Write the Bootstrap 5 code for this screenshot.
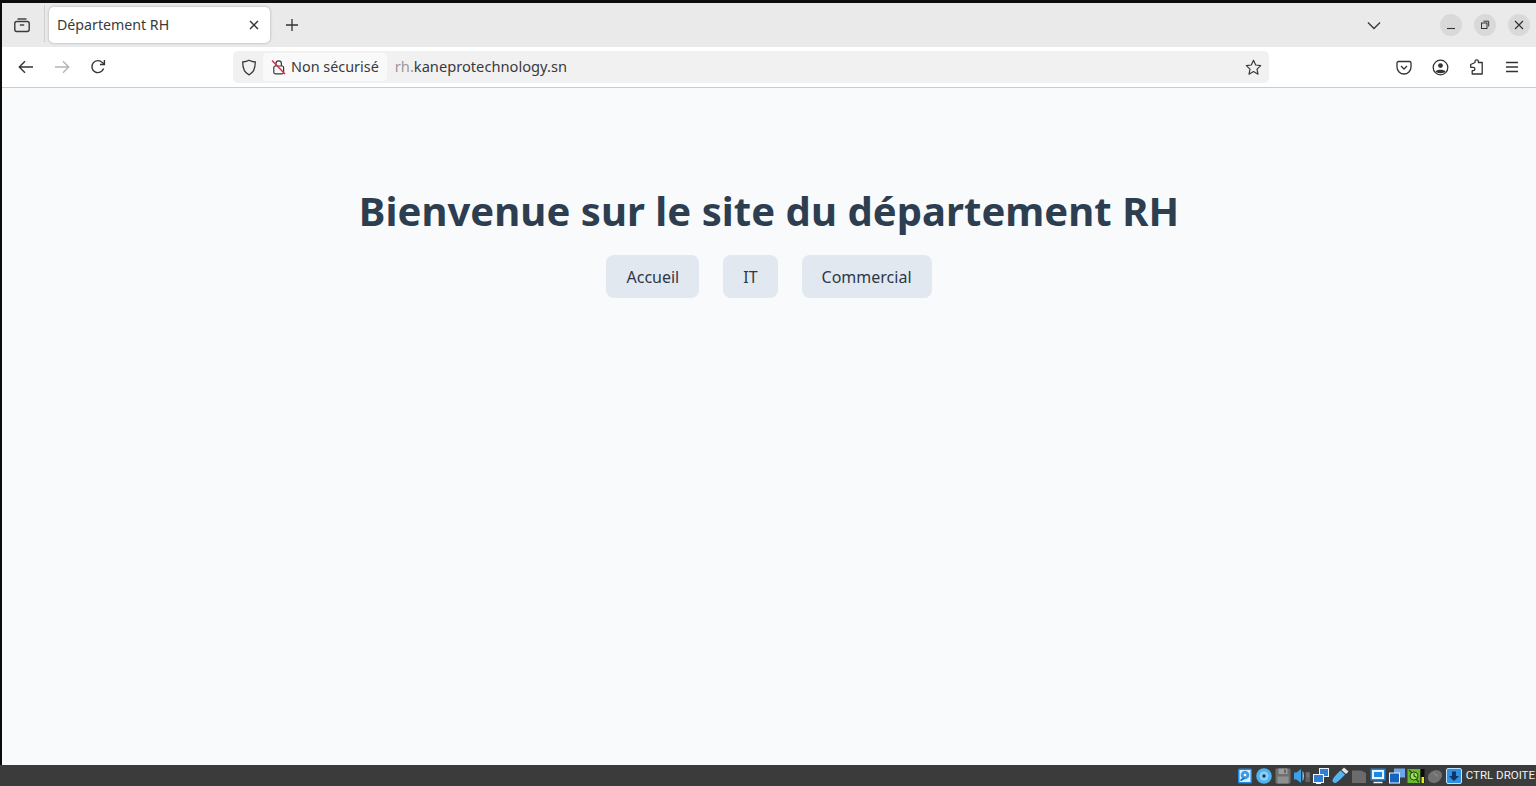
<!DOCTYPE html>
<html lang="fr">
<head>
    <meta charset="UTF-8" />
    <title>Département RH</title>
    <link rel="stylesheet" href="https://cdn.jsdelivr.net/npm/bootstrap@5.3.0/dist/css/bootstrap.min.css" />
    <style>
        html, body { height: 100%; overflow: hidden; }
        body { background: #0c0c0c; font-family: "Noto Sans", sans-serif; padding-top: 3px; }
        .screen { height: 783px; }
        .window { padding-left: 2px; min-height: 0; }
        .ui-text { font-family: "Noto Sans", sans-serif; color: #3a3a3a; }
        .tab-strip { height: 44px; background: #eaeaea; }
        .tab-side { width: 43px; height: 37px; border-right: 1px solid #cfcfcf; margin-top: -3px; padding: 3px 2px 0 0; }
        .tab-pill { width: 221px; height: 36px; margin-left: 4px; padding: 0 10px 0 8px; background: #fff; border-radius: 5px; box-shadow: 0 0 3px rgba(0,0,0,.28); font-size: 14.2px; }
        .tab-add { width: 44px; }
        .tab-fill { min-width: 0; }
        .win-btn { width: 22px; height: 22px; border-radius: 50%; background: #d9d9d9; }
        .win-group { gap: 12px; padding-right: 6px; }
        .chevron-box { margin-right: 59px; }
        .tool-strip { height: 41px; background: #fff; border-bottom: 1px solid #cccccc; padding-left: 6px; }
        .tool-btn { width: 36px; height: 36px; }
        .url-bar { width: 1036px; height: 32px; margin-left: 117px; background: #f1f1f2; border-radius: 5px; padding: 2px 3px 2px 3px; font-size: 14.66px; }
        .shield-box { width: 25px; margin-right: 2px; }
        .url-line { margin-top: -1px; }
        .notsecure { height: 28px; padding: 0 8px 0 8px; background: #f9f9fa; border-radius: 4px; margin-right: 8px; font-size: 14.4px; gap: 5px; }
        .url-dim { color: #9a9a9a; }
        .tool-right { gap: 0; margin-left: 117px; }
        .page-area { background: #f8fafc; min-height: 0; padding-top: 95px; }
        .page-title { font-size: 40px; letter-spacing: .05px; font-weight: 700; color: #2c3e50; line-height: 55px; margin-bottom: 17px; }
        .dept-btn { background: #e2e8f0; color: #2d3748; font-size: 16px; padding: 11px 20px 9px; border-radius: 8px; border: 0; line-height: 23px; text-decoration: none; }
        .dept-row { gap: 24px; }
        .host-bar { height: 21px; background: #3b3b3b; }
        .host-icons { gap: 1px; }
        .host-text { font-family: Roboto, sans-serif; font-size: 11.5px; color: #f2f2f2; padding: 0 1px 0 3px; }
    </style>
</head>
<body>

<div class="screen d-flex flex-column">
    <div class="window d-flex flex-column flex-grow-1">
        <div class="tab-strip d-flex align-items-center ui-text">
            <div class="tab-side d-flex align-items-center justify-content-center">
                <svg width="18" height="18" viewBox="0 0 18 18" fill="none" stroke="#3a3a3a" stroke-width="1.4"><path d="M4.5 3h9"/><rect x="1.8" y="5.5" width="14.4" height="10" rx="2"/><path d="M6.8 9h4.4"/></svg>
            </div>
            <div class="tab-pill d-flex align-items-center justify-content-between">
                <span>Département RH</span>
                <svg width="12" height="10" viewBox="0 0 12 10" stroke="#333" stroke-width="1.4"><path d="M2 1l8 8M10 1l-8 8"/></svg>
            </div>
            <div class="tab-add d-flex justify-content-center">
                <svg width="14" height="14" viewBox="0 0 14 14" stroke="#333" stroke-width="1.3"><path d="M7 1v12M1 7h12"/></svg>
            </div>
            <div class="tab-fill flex-grow-1"></div>
            <div class="chevron-box d-flex">
                <svg width="14" height="9" viewBox="0 0 14 9" fill="none" stroke="#3a3a3a" stroke-width="1.4"><path d="M1 1.5l6 6 6-6"/></svg>
            </div>
            <div class="win-group d-flex">
                <div class="win-btn d-flex align-items-center justify-content-center">
                    <svg width="10" height="10" viewBox="0 0 10 10" stroke="#333" stroke-width="1.1"><path d="M1 8.5h8"/></svg>
                </div>
                <div class="win-btn d-flex align-items-center justify-content-center">
                    <svg width="10" height="10" viewBox="0 0 10 10" fill="none" stroke="#333" stroke-width="1"><rect x="1.5" y="3" width="5.5" height="5.5"/><path d="M3.5 1.2h5.2v5.3"/></svg>
                </div>
                <div class="win-btn d-flex align-items-center justify-content-center">
                    <svg width="10" height="10" viewBox="0 0 10 10" stroke="#333" stroke-width="1.2"><path d="M1 1l8 8M9 1l-8 8"/></svg>
                </div>
            </div>
        </div>

        <div class="tool-strip d-flex align-items-center ui-text">
            <div class="tool-btn d-flex align-items-center justify-content-center">
                <svg width="16" height="14" viewBox="0 0 16 14" fill="none" stroke="#333" stroke-width="1.4"><path d="M15 7H1.5M7 1.3L1.3 7 7 12.7"/></svg>
            </div>
            <div class="tool-btn d-flex align-items-center justify-content-center">
                <svg width="16" height="14" viewBox="0 0 16 14" fill="none" stroke="#b4b4b4" stroke-width="1.4"><path d="M1 7h13.5M9 1.3L14.7 7 9 12.7"/></svg>
            </div>
            <div class="tool-btn d-flex align-items-center justify-content-center">
                <svg width="16" height="16" viewBox="0 0 16 16" fill="none" stroke="#333" stroke-width="1.4"><path d="M13.6 9.5A6 6 0 1 1 12.4 3.6L14 5"/><path d="M14.4 1v4.5H10" /></svg>
            </div>
            <div class="url-bar d-flex align-items-center">
                <div class="shield-box d-flex justify-content-center">
                    <svg width="16" height="17" viewBox="0 0 16 17" fill="none" stroke="#3a3a3a" stroke-width="1.3"><path d="M8 1.2c2 1.2 4 1.6 6.3 1.8 0 5.5-1 10.5-6.3 12.8C2.7 13.5 1.7 8.5 1.7 3 4 2.8 6 2.4 8 1.2z"/></svg>
                </div>
                <div class="notsecure d-flex align-items-center">
                    <svg width="15" height="16" viewBox="0 0 15 16" fill="none"><path d="M5 7V4.5a2.7 2.7 0 0 1 5.4 0V7" stroke="#3a3a3a" stroke-width="1.2"/><rect x="2.8" y="7" width="9.8" height="7.8" rx="1.5" stroke="#3a3a3a" stroke-width="1.2"/><path d="M1 1.5l13 13.5" stroke="#e0294a" stroke-width="1.4"/></svg>
                    <span>Non sécurisé</span>
                </div>
                <span class="url-line"><span class="url-dim">rh.</span>kaneprotechnology.sn</span>
                <div class="flex-grow-1"></div>
                <svg class="me-1" width="17" height="17" viewBox="0 0 17 17" fill="none" stroke="#3a3a3a" stroke-width="1.2"><path d="M8.5 1.3l2.2 4.7 5 .6-3.7 3.5 1 5.100-4.500-2.600-4.500 2.600 1-5.100L1.300 6.600l5-.6z" stroke-linejoin="round"/></svg>
            </div>
            <div class="tool-right d-flex">
                <div class="tool-btn d-flex align-items-center justify-content-center">
                    <svg width="16" height="15" viewBox="0 0 16 15" fill="none" stroke="#333" stroke-width="1.3"><path d="M2.5 1.500h11A1.500 1.500 0 0 1 15 3v4a7 7 0 0 1-14 0V3a1.500 1.500 0 0 1 1.500-1.500z"/><path d="M5 6l3 3 3-3"/></svg>
                </div>
                <div class="tool-btn d-flex align-items-center justify-content-center">
                    <svg width="17" height="17" viewBox="0 0 17 17"><circle cx="8.5" cy="8.5" r="7.3" fill="none" stroke="#333" stroke-width="1.3"/><circle cx="8.5" cy="6.6" r="2.4" fill="#333"/><path d="M3.5 12.500c1-2.200 9-2.200 10 0-1.500 2.300-8.500 2.300-10 0z" fill="#333"/></svg>
                </div>
                <div class="tool-btn d-flex align-items-center justify-content-center">
                    <svg width="15" height="16" viewBox="0 0 15 16" fill="none" stroke="#333" stroke-width="1.3" stroke-linejoin="round"><path d="M6 3.500V2.600a1.700 1.700 0 0 1 3.400 0v.9h3.800v11.500H3.200v-3.300h1a1.700 1.700 0 0 0 0-3.400h-2.500V5.500L6 3.500z"/></svg>
                </div>
                <div class="tool-btn d-flex align-items-center justify-content-center">
                    <svg width="14" height="12" viewBox="0 0 14 12" stroke="#333" stroke-width="1.3"><path d="M1 1.500h12M1 6h12M1 10.500h12"/></svg>
                </div>
            </div>
        </div>

        <main class="page-area flex-grow-1 text-center">
            <h1 class="page-title">Bienvenue sur le site du département RH</h1>
            <div class="dept-row d-flex justify-content-center">
                <a class="btn dept-btn" href="#">Accueil</a>
                <a class="btn dept-btn" href="#">IT</a>
                <a class="btn dept-btn" href="#">Commercial</a>
            </div>
        </main>
    </div>

    <footer class="host-bar d-flex align-items-center justify-content-end">
        <div class="host-icons d-flex align-items-center">
            <!-- hard disk -->
            <svg width="18" height="18" viewBox="0 0 18 18"><rect x="2" y="1.500" width="14" height="15" rx="1.500" fill="#1e88e5"/><rect x="3.500" y="3" width="11" height="12" fill="#d9eefc"/><circle cx="9" cy="8" r="4.300" fill="#3d9be8"/><circle cx="9" cy="8" r="1.300" fill="#fff"/><path d="M4.500 13.500l4-2.500" stroke="#1565c0" stroke-width="1.500"/></svg>
            <!-- optical disc -->
            <svg width="18" height="18" viewBox="0 0 18 18"><circle cx="9" cy="9" r="7.800" fill="#4fb3f0"/><circle cx="9" cy="9" r="4.500" fill="#8bd0f7"/><circle cx="9" cy="9" r="1.700" fill="#123a6a"/></svg>
            <!-- floppy, inactive -->
            <svg width="18" height="18" viewBox="0 0 18 18"><rect x="1.500" y="1.500" width="15" height="15" rx="1" fill="#6f6f6f"/><rect x="4.500" y="1.500" width="9" height="5.500" fill="#9c9c9c"/><rect x="10" y="2.500" width="2" height="3.500" fill="#666"/><rect x="3.500" y="9.500" width="11" height="7" fill="#8f8f8f"/></svg>
            <!-- audio -->
            <svg width="18" height="18" viewBox="0 0 18 18"><path d="M1 5.500h2.500L8 2v14l-4.500-3.500H1z" fill="#3aa0e8"/><path d="M9.500 4c2 1.500 2 8.500 0 10z" fill="#7cc5f5"/><path d="M12.500 5h4.500v10h-4.500z" fill="#626262"/><path d="M13.500 7h2.500M13.500 9h2.500" stroke="#8a8a8a"/></svg>
            <!-- network -->
            <svg width="18" height="18" viewBox="0 0 18 18"><rect x="7.500" y="1.500" width="9" height="8" fill="#2f7fd6" stroke="#eef6fd"/><rect x="1.500" y="7.500" width="10" height="8" fill="#2f7fd6" stroke="#eef6fd"/><path d="M4 16.500h5" stroke="#eef6fd"/></svg>
            <!-- usb -->
            <svg width="18" height="18" viewBox="0 0 18 18"><path d="M1.500 13.500c0-2 6-8.500 8-10l4.500 4c-1.500 2-7.500 8-9.500 8.500-1.500.3-3-1-3-2.500z" fill="#56b4f0"/><path d="M10.500 3l2.500-2.500 4.500 4L15 7z" fill="#e4e4e4"/></svg>
            <!-- shared folder, inactive -->
            <svg width="18" height="18" viewBox="0 0 18 18"><path d="M2 3.500h9l5 2.500v10H2z" fill="#6b6b6b"/></svg>
            <!-- display -->
            <svg width="18" height="18" viewBox="0 0 18 18"><rect x="1.500" y="1.500" width="15" height="12" fill="#1e88e5"/><rect x="3" y="3" width="12" height="9" fill="#e8f4fd"/><rect x="5" y="5" width="8" height="5" fill="#1e88e5"/><path d="M4.500 15.500h9" stroke="#e8f4fd" stroke-width="1.500"/></svg>
            <!-- capture -->
            <svg width="18" height="18" viewBox="0 0 18 18"><rect x="6" y="1.500" width="11" height="9" fill="#6ea6ec"/><rect x="1.500" y="6" width="10" height="10" fill="#1565c0" stroke="#e8f4fd"/></svg>
            <!-- cpu/vt-x with bar -->
            <svg width="18" height="18" viewBox="0 0 18 18"><rect x="0.500" y="2" width="13" height="14" fill="#6ab82c"/><circle cx="7" cy="9" r="4" fill="#a6e05a" stroke="#1d4d10"/><path d="M2 3l3 3M12 15l-3-3M7 6.500V9l2.500 1.500" stroke="#1d4d10" stroke-width="1.200" fill="none"/><rect x="13.500" y="2" width="4" height="14" fill="#0c0c0c"/><rect x="14.500" y="10" width="2.500" height="6" fill="#e8e81e"/></svg>
            <!-- mouse, inactive -->
            <svg width="18" height="18" viewBox="0 0 18 18"><ellipse cx="9" cy="9.500" rx="7.500" ry="6" fill="#717171" transform="rotate(-35 9 9.500)"/><path d="M7 5.500l5 4" stroke="#959595"/></svg>
            <!-- download -->
            <svg width="18" height="18" viewBox="0 0 18 18"><rect x="1.500" y="1.500" width="15" height="15" rx="1.500" fill="#2f8fe0" stroke="#bfe0fa"/><path d="M7 4.500h4V9h3l-5 5-5-5h3z" fill="#0f3568"/></svg>
        </div>
        <span class="host-text">CTRL DROITE</span>
    </footer>
</div>

<script src="https://cdn.jsdelivr.net/npm/bootstrap@5.3.0/dist/js/bootstrap.bundle.min.js"></script>
</body>
</html>
